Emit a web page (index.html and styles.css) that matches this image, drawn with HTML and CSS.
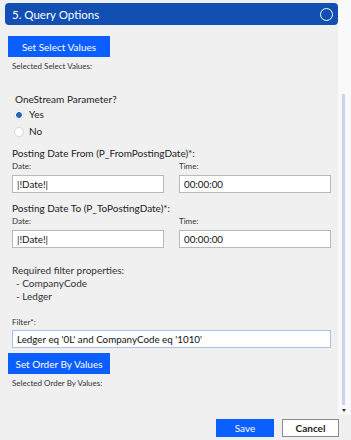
FILE: index.html
```html
<!DOCTYPE html>
<html>
<head>
<meta charset="utf-8">
<link rel="stylesheet" href="styles.css">
</head>
<body>
<div class="frame">
  <div class="scroll-area">
    <div class="content">
      <div class="header">
        <span class="header-title">5. Query Options</span>
        <span class="header-circle"></span>
      </div>
      <div class="pad">
        <button class="btn-blue btn-set">Set Select Values</button>
        <div class="small sel-values">Selected Select Values:</div>

        <div class="param-label">OneStream Parameter?</div>
        <div class="radio-row"><span class="radio checked"></span><span>Yes</span></div>
        <div class="radio-row"><span class="radio"></span><span>No</span></div>

        <div class="group-label first-group">Posting Date From (P_FromPostingDate)*:</div>
        <div class="two-col">
          <div class="col">
            <div class="small field-label">Date:</div>
            <div class="input">|!Date!|</div>
          </div>
          <div class="col">
            <div class="small field-label">Time:</div>
            <div class="input">00:00:00</div>
          </div>
        </div>

        <div class="group-label second-group">Posting Date To (P_ToPostingDate)*:</div>
        <div class="two-col">
          <div class="col">
            <div class="small field-label">Date:</div>
            <div class="input">|!Date!|</div>
          </div>
          <div class="col">
            <div class="small field-label">Time:</div>
            <div class="input">00:00:00</div>
          </div>
        </div>

        <div class="required">
          <div class="req-title">Required filter properties:</div>
          <div class="req-item">- CompanyCode</div>
          <div class="req-item">- Ledger</div>
        </div>

        <div class="small filter-label">Filter*:</div>
        <div class="input input-wide input-focus">Ledger eq '0L' and CompanyCode eq '1010'</div>

        <button class="btn-blue btn-order">Set Order By Values</button>
        <div class="small sel-values">Selected Order By Values:</div>
      </div>
    </div>
    <div class="track">
      <div class="thumb"></div>
      <div class="arrow"></div>
    </div>
  </div>
  <div class="footer">
    <button class="btn-blue btn-save">Save</button>
    <button class="btn-cancel">Cancel</button>
  </div>
</div>
</body>
</html>
```
FILE: styles.css
```css
* { box-sizing: border-box; }
html, body {
  margin: 0;
  padding: 0;
  width: 351px;
  height: 440px;
  overflow: hidden;
  background: #f0f0f0;
  font-family: "Lato", "Open Sans", sans-serif;
  color: #222;
}
.frame {
  display: flex;
  flex-direction: column;
  height: 440px;
}
.scroll-area {
  display: flex;
  height: 415px;
}
.content {
  width: 338px;
  padding-top: 3px;
}
.header {
  margin-left: 5px;
  width: 333px;
  height: 22px;
  background: #1150b2;
  border-radius: 4px;
  display: flex;
  align-items: center;
  justify-content: space-between;
  padding: 0 5px 0 7px;
}
.header-title {
  color: #fff;
  font-size: 11.5px;
}
.header-circle {
  width: 13px;
  height: 13px;
  border: 1.5px solid #fff;
  border-radius: 50%;
}
.pad {
  padding: 0 0 0 12px;
}
.btn-blue {
  background: #0b5eff;
  color: #fff;
  border: none;
  font-family: inherit;
  font-size: 10px;
  padding: 0;
  display: block;
}
.btn-set {
  margin: 11px 0 0 -4px;
  width: 102px;
  height: 21px;
}
.btn-order {
  margin: 5px 0 0 -4px;
  width: 102px;
  height: 21px;
}
.small {
  font-size: 8px;
  color: #333;
  line-height: 12px;
}
.sel-values {
  margin-top: 3px;
}
.param-label {
  font-size: 10px;
  line-height: 14px;
  margin: 20px 0 0 3px;
}
.radio-row {
  display: flex;
  align-items: center;
  gap: 5px;
  font-size: 10px;
  line-height: 17px;
  margin-left: 2px;
}
.radio {
  width: 10px;
  height: 10px;
  border-radius: 50%;
  background: #fff;
  border: 1px solid #d8d8d8;
  display: inline-block;
}
.radio.checked {
  border-color: #dfe7f5;
  background: radial-gradient(circle, #2c64b8 0 2.6px, #fff 3.2px);
}
.group-label {
  font-size: 10px;
  line-height: 14px;
}
.first-group { margin-top: 6px; }
.second-group { margin-top: 8px; }
.two-col {
  display: flex;
  gap: 15px;
  width: 319px;
}
.col {
  flex: 1;
}
.field-label {
  line-height: 12px;
}
.input {
  margin-top: 3px;
  height: 18px;
  background: #fff;
  border: 1px solid #b9b9b9;
  font-size: 9.8px;
  line-height: 16px;
  padding-left: 4px;
  color: #111;
}
.required {
  margin-top: 16px;
  font-size: 10px;
  line-height: 13px;
  color: #333;
}
.req-item {
  padding-left: 4px;
}
.filter-label {
  margin-top: 13px;
}
.input-wide {
  width: 319px;
  margin-top: 2px;
}
.input-focus {
  border-color: #a9c1e8;
}
.track {
  width: 13px;
  background: #f9f9f9;
  display: flex;
  flex-direction: column;
  align-items: center;
  padding-top: 94px;
}
.thumb {
  width: 3px;
  height: 311px;
  background: #c5d4ef;
  margin-left: -3px;
}
.arrow {
  margin-top: 4px;
  margin-left: -2px;
  width: 0;
  height: 0;
  border-left: 2.5px solid transparent;
  border-right: 2.5px solid transparent;
  border-top: 3px solid #333;
}
.footer {
  display: flex;
  justify-content: flex-end;
  gap: 8px;
  padding: 4px 12px 0 0;
}
.btn-save {
  width: 58px;
  height: 18px;
  font-size: 10px;
}
.btn-cancel {
  width: 57px;
  height: 18px;
  background: #fff;
  border: 1px solid #8a8a8a;
  font-family: inherit;
  font-size: 10px;
  font-weight: 700;
  color: #222;
  padding: 0;
}
```
